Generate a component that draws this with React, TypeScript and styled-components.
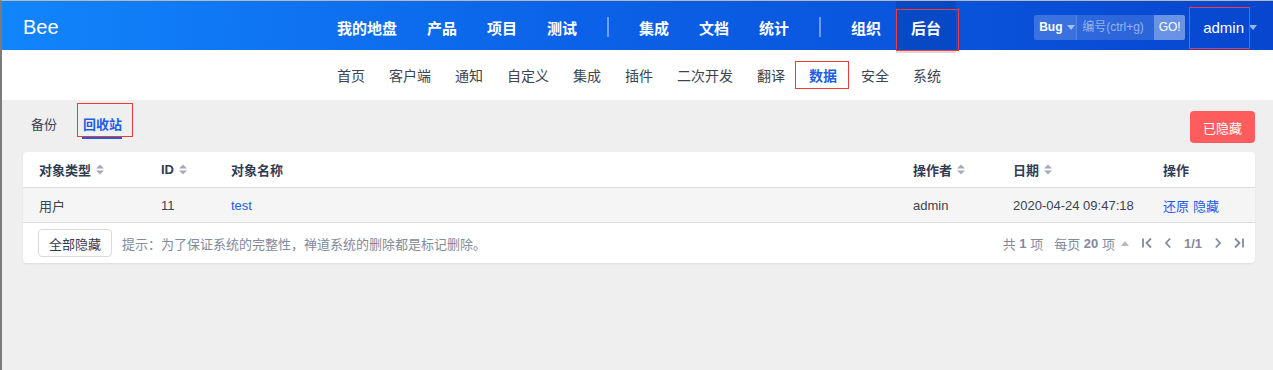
import React from 'react';
import styled, { createGlobalStyle } from 'styled-components';

const GlobalStyle = createGlobalStyle`
  html, body {
    margin: 0;
    padding: 0;
  }

  body {
    background: #efefef;
    font-family: "Liberation Sans", "Noto Sans CJK SC", sans-serif;
    font-size: 13px;
    color: #3c4353;
  }

  * {
    box-sizing: border-box;
  }
`;

const mainNav = [
  ['我的地盘', '产品', '项目', '测试'],
  ['集成', '文档', '统计'],
  ['组织', '后台'],
];

const subNav = ['首页', '客户端', '通知', '自定义', '集成', '插件', '二次开发', '翻译', '数据', '安全', '系统'];

function SortIcon() {
  return (
    <SortSvg width="8" height="11" viewBox="0 0 8 11">
      <polygon points="0,4.5 4,0.5 8,4.5" />
      <polygon points="0,6.5 4,10.5 8,6.5" />
    </SortSvg>
  );
}

function PagerIcon({ kind }: { kind: 'first' | 'prev' | 'next' | 'last' }) {
  const wide = kind === 'first' || kind === 'last';
  return (
    <PagerSvg width={wide ? 10 : 6} height="12" viewBox={wide ? '0 0 10 12' : '0 0 6 12'}>
      {kind === 'first' && <path d="M1 1.5v9M9 1.5L4.5 6L9 10.5" />}
      {kind === 'prev' && <path d="M5.2 1.5L1 6l4.2 4.5" />}
      {kind === 'next' && <path d="M0.8 1.5L5 6l-4.2 4.5" />}
      {kind === 'last' && <path d="M9 1.5v9M1 1.5L5.5 6L1 10.5" />}
    </PagerSvg>
  );
}

function App() {
  return (
    <Page>
      <GlobalStyle />
      <Header>
        <Logo>Bee</Logo>
        <MainNav>
          {mainNav.map((group, gi) => (
            <React.Fragment key={gi}>
              {gi > 0 && <NavDivider />}
              {group.map((item) => (
                <NavItem key={item} $active={item === '后台'}>{item}</NavItem>
              ))}
            </React.Fragment>
          ))}
        </MainNav>
        <HeaderRight>
          <SearchGroup>
            <SearchType>
              Bug
              <Caret $color="rgba(255,255,255,0.55)" />
            </SearchType>
            <SearchInput placeholder="编号(ctrl+g)" />
            <GoButton>GO!</GoButton>
          </SearchGroup>
          <UserMenu>
            admin
            <Caret $color="rgba(255,255,255,0.6)" />
          </UserMenu>
        </HeaderRight>
      </Header>

      <SubNav>
        {subNav.map((item) => (
          <SubItem key={item} $active={item === '数据'}>{item}</SubItem>
        ))}
      </SubNav>

      <Toolbar>
        <Tabs>
          <Tab>备份</Tab>
          <Tab $active>回收站</Tab>
        </Tabs>
        <DangerButton>已隐藏</DangerButton>
      </Toolbar>

      <Card>
        <HeadRow>
          <Cell>对象类型<SortIcon /></Cell>
          <Cell>ID<SortIcon /></Cell>
          <Cell>对象名称</Cell>
          <Cell>操作者<SortIcon /></Cell>
          <Cell>日期<SortIcon /></Cell>
          <Cell>操作</Cell>
        </HeadRow>
        <DataRow>
          <Cell>用户</Cell>
          <Cell>11</Cell>
          <Cell><Link>test</Link></Cell>
          <Cell>admin</Cell>
          <Cell>2020-04-24 09:47:18</Cell>
          <Cell>
            <Link>还原</Link>
            <Link>隐藏</Link>
          </Cell>
        </DataRow>
        <Footer>
          <FooterLeft>
            <PlainButton>全部隐藏</PlainButton>
            <Hint>提示：为了保证系统的完整性，禅道系统的删除都是标记删除。</Hint>
          </FooterLeft>
          <Pager>
            <PagerText>共 <b>1</b> 项</PagerText>
            <PagerText>
              每页 <b>20</b> 项
              <UpCaret />
            </PagerText>
            <PagerIcon kind="first" />
            <PagerIcon kind="prev" />
            <PagerText><b>1/1</b></PagerText>
            <PagerIcon kind="next" />
            <PagerIcon kind="last" />
          </Pager>
        </Footer>
      </Card>
    </Page>
  );
}

export default App;

const Page = styled.div`
  min-height: 100vh;
  border-left: 2px solid #7b7b7b;
  border-top: 1px solid #b8b8b8;
  background: #efefef;
`;

const Header = styled.header`
  display: grid;
  grid-template-columns: 1fr auto 1fr;
  height: 49px;
  background: linear-gradient(92deg, #1285fb 0%, #0b62e8 45%, #0846cf 100%);
  color: #fff;
`;

const Logo = styled.div`
  padding-left: 21px;
  font-size: 20px;
  line-height: 52px;
`;

const MainNav = styled.nav`
  display: flex;
  align-items: stretch;
  padding-left: 3px;
`;

const NavItem = styled.div<{ $active?: boolean }>`
  position: relative;
  display: flex;
  align-items: center;
  padding: 0 15px;
  font-family: "Noto Sans CJK SC", sans-serif;
  font-size: 15px;
  font-weight: bold;
  color: #fff;
  background: ${(props) => (props.$active ? 'rgba(0, 20, 80, 0.16)' : 'transparent')};

  ${(props) => props.$active && `
    &::after {
      content: '';
      position: absolute;
      left: 0;
      right: -3px;
      top: 8px;
      bottom: 2px;
      border: 1px solid #ff3838;
    }
  `}
`;

const NavDivider = styled.span`
  align-self: center;
  width: 2px;
  height: 20px;
  margin: 0 15px;
  background: rgba(255, 255, 255, 0.4);
`;

const HeaderRight = styled.div`
  display: flex;
  justify-content: flex-end;
  align-items: center;
  padding-right: 16px;
`;

const SearchGroup = styled.div`
  display: flex;
  height: 25px;
  border-radius: 2px;
  overflow: hidden;
`;

const SearchType = styled.div`
  display: flex;
  align-items: center;
  width: 43px;
  padding-left: 5px;
  font-size: 12px;
  font-weight: bold;
  background: rgba(255, 255, 255, 0.2);
  border-right: 1px solid rgba(255, 255, 255, 0.12);
`;

const Caret = styled.span<{ $color: string }>`
  margin-left: 5px;
  border-left: 4px solid transparent;
  border-right: 4px solid transparent;
  border-top: 5px solid ${(props) => props.$color};
`;

const SearchInput = styled.input`
  width: 77px;
  height: 25px;
  padding: 0 0 0 5px;
  border: none;
  outline: none;
  font-family: "Liberation Sans", "Noto Sans CJK SC", sans-serif;
  font-size: 12px;
  color: #fff;
  background: rgba(255, 255, 255, 0.15);

  &::placeholder {
    color: rgba(255, 255, 255, 0.5);
  }
`;

const GoButton = styled.button`
  width: 31px;
  padding: 0;
  border: none;
  font-family: "Liberation Sans", sans-serif;
  font-size: 12px;
  color: #fff;
  background: rgba(255, 255, 255, 0.4);
`;

const UserMenu = styled.div`
  position: relative;
  display: flex;
  align-items: center;
  align-self: stretch;
  margin-left: 4px;
  padding-left: 14px;
  font-size: 15px;

  &::after {
    content: '';
    position: absolute;
    left: 0;
    width: 59px;
    top: 6px;
    bottom: 4px;
    border: 1px solid #ff3838;
  }
`;

const SubNav = styled.nav`
  display: flex;
  justify-content: center;
  height: 50px;
  padding-left: 3px;
  background: #fff;
`;

const SubItem = styled.div<{ $active?: boolean }>`
  position: relative;
  display: flex;
  align-items: center;
  padding: 0 12px;
  font-family: "Noto Sans CJK SC", sans-serif;
  font-size: 14px;
  color: ${(props) => (props.$active ? '#1b5ee6' : '#3c4353')};
  font-weight: ${(props) => (props.$active ? 'bold' : 'normal')};

  ${(props) => props.$active && `
    &::after {
      content: '';
      position: absolute;
      left: -2px;
      right: 0;
      top: 11px;
      bottom: 11px;
      border: 1px solid #f03a3a;
    }
  `}
`;

const Toolbar = styled.div`
  display: flex;
  justify-content: space-between;
  align-items: flex-start;
  padding: 11px 18px 9px 21px;
`;

const Tabs = styled.div`
  display: flex;
`;

const Tab = styled.div<{ $active?: boolean }>`
  position: relative;
  height: 28px;
  margin-right: 10px;
  padding: 0 8px;
  line-height: 26px;
  font-family: "Noto Sans CJK SC", sans-serif;
  font-size: 13px;
  color: ${(props) => (props.$active ? '#1b5ee6' : '#3c4353')};
  font-weight: ${(props) => (props.$active ? 'bold' : 'normal')};

  ${(props) => props.$active && `
    &::before {
      content: '';
      position: absolute;
      left: 7px;
      right: 8px;
      bottom: 0;
      height: 2px;
      background: #1b5ee6;
    }

    &::after {
      content: '';
      position: absolute;
      left: 2px;
      right: -3px;
      top: -8px;
      bottom: 2px;
      border: 1px solid #f03a3a;
    }
  `}
`;

const DangerButton = styled.button`
  width: 65px;
  height: 32px;
  padding: 0;
  border: none;
  border-radius: 4px;
  font-family: "Noto Sans CJK SC", sans-serif;
  font-size: 13px;
  color: #fff;
  background: #ff5d5d;
`;

const Card = styled.section`
  margin: 0 18px 0 21px;
  background: #fff;
  border-radius: 4px;
  box-shadow: 0 1px 2px rgba(0, 0, 0, 0.08);
  overflow: hidden;
`;

const Row = styled.div`
  display: grid;
  grid-template-columns: 122px 70px 1fr 100px 150px 92px;
  align-items: center;
  padding-left: 16px;
  border-bottom: 1px solid #dcdde0;
`;

const HeadRow = styled(Row)`
  height: 36px;
  font-weight: bold;
  color: #313c52;
`;

const DataRow = styled(Row)`
  height: 35px;
  background: #f5f5f5;
`;

const Cell = styled.div`
  display: flex;
  align-items: center;
  gap: 4px;
  font-size: 13px;
  white-space: nowrap;
`;

const SortSvg = styled.svg`
  margin-left: 1px;
  fill: #a6aab8;
`;

const Link = styled.span`
  color: #1b5ee6;
`;

const Footer = styled.div`
  display: flex;
  justify-content: space-between;
  align-items: center;
  height: 40px;
  padding: 0 11px 0 15px;
`;

const FooterLeft = styled.div`
  display: flex;
  align-items: center;
  gap: 10px;
`;

const PlainButton = styled.button`
  height: 28px;
  padding: 0 10px;
  border: 1px solid #d8dbe1;
  border-radius: 4px;
  background: #fff;
  font-family: "Noto Sans CJK SC", sans-serif;
  font-size: 13px;
  color: #313c52;
`;

const Hint = styled.span`
  font-family: "Noto Sans CJK SC", sans-serif;
  font-size: 13px;
  color: #838a9d;
`;

const Pager = styled.div`
  display: flex;
  align-items: center;
  gap: 13px;
  color: #838a9d;
`;

const PagerText = styled.span`
  display: flex;
  align-items: center;
  white-space: pre;
  font-size: 13px;

  & + & {
    margin-left: -2px;
  }

  b {
    font-family: "Liberation Sans", sans-serif;
  }
`;

const UpCaret = styled.span`
  margin-left: 6px;
  border-left: 4px solid transparent;
  border-right: 4px solid transparent;
  border-bottom: 5px solid #b5b9c4;
`;

const PagerSvg = styled.svg`
  fill: none;
  stroke: #838a9d;
  stroke-width: 1.8;
`;
